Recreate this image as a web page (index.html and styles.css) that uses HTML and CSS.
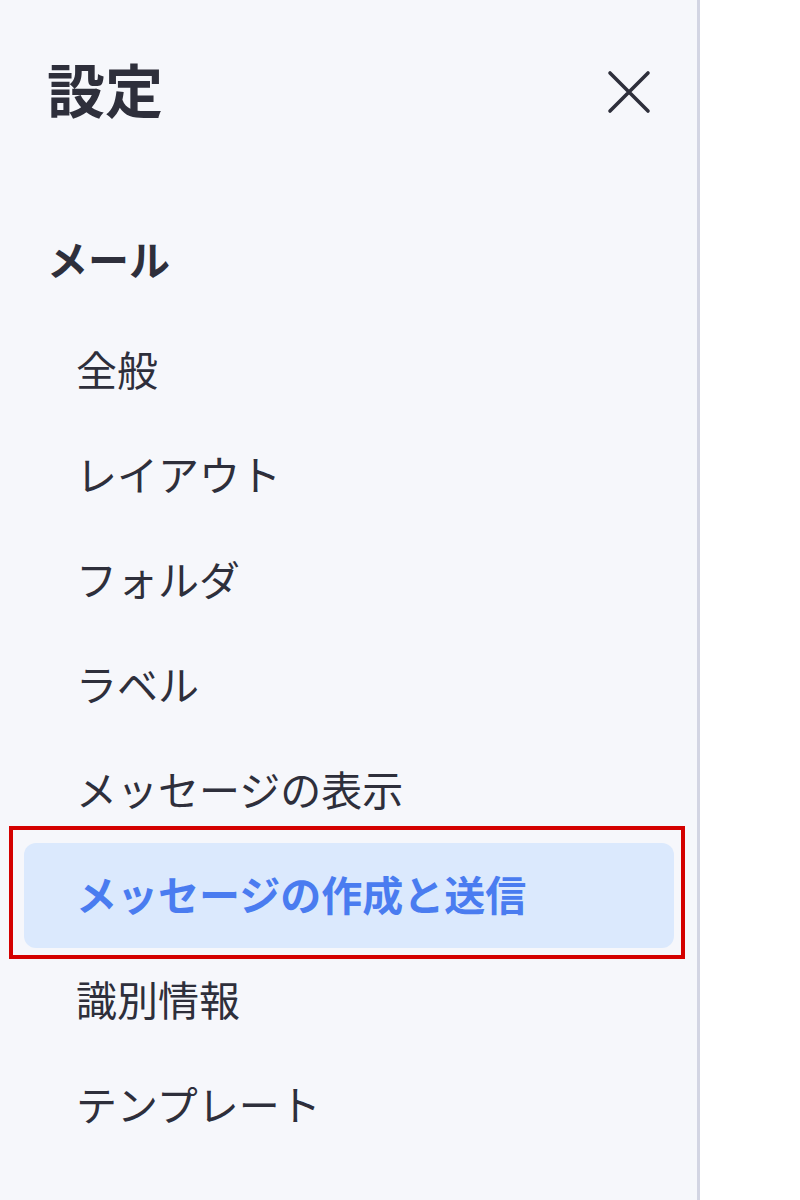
FILE: index.html
```html
<!DOCTYPE html>
<html lang="ja">
<head>
  <meta charset="UTF-8" />
  <meta name="viewport" content="width=device-width, initial-scale=1.0"/>
  <title>設定</title>
  <link rel="stylesheet" href="styles.css">
</head>
<body>
  <aside class="sidebar">
    <div class="sidebar-header">
      <h1>設定</h1>
      <button class="close-btn" type="button" aria-label="閉じる">
        <svg width="44" height="44" viewBox="0 0 44 44">
          <path d="M3 3 L41 41 M41 3 L3 41" stroke="#2e2f3b" stroke-width="3.6" stroke-linecap="round" fill="none"/>
        </svg>
      </button>
    </div>

    <h2 class="section-title">メール</h2>
    <ul class="menu">
      <li class="menu-item">全般</li>
      <li class="menu-item">レイアウト</li>
      <li class="menu-item">フォルダ</li>
      <li class="menu-item">ラベル</li>
      <li class="menu-item">メッセージの表示</li>
      <li class="menu-item active">メッセージの作成と送信</li>
      <li class="menu-item">識別情報</li>
      <li class="menu-item">テンプレート</li>
    </ul>
  </aside>
</body>
</html>
```

FILE: styles.css
```css
body {
  margin: 0;
  background: #ffffff;
  font-family: "Noto Sans CJK JP", "Noto Sans", sans-serif;
  color: #2e2f3b;
}
.sidebar {
  width: 700px;
  min-height: 100vh;
  box-sizing: border-box;
  background-color: #f6f7fb;
  border-right: 3px solid #d3d5e3;
  padding-top: 37px;
}
.sidebar-header {
  height: 110px;
  display: flex;
  align-items: center;
  justify-content: space-between;
  padding: 0 46px 0 47px;
}
.sidebar-header h1 {
  margin: 0 0 8px 0;
  font-size: 58px;
  line-height: 1;
  font-weight: bold;
}
.close-btn {
  background: none;
  border: none;
  padding: 0;
  width: 44px;
  height: 44px;
  cursor: pointer;
}
.close-btn svg {
  display: block;
}
.section-title {
  margin: 81px 0 0 47px;
  height: 60px;
  line-height: 60px;
  font-size: 41px;
  font-weight: bold;
}
.menu {
  list-style: none;
  margin: 30px 0 0 24px;
  padding: 0;
  width: 650px;
}
.menu-item {
  box-sizing: border-box;
  height: 105px;
  line-height: 100px;
  padding: 0 0 5px 52px;
  font-size: 41px;
  border-radius: 12px;
  cursor: pointer;
}
.menu-item.active {
  position: relative;
  background-color: #dbe9fd;
  color: #4a7cf0;
  font-weight: bold;
}
.menu-item.active::after {
  content: "";
  position: absolute;
  top: -17px;
  bottom: -11px;
  left: -15px;
  right: -11px;
  border: 4px solid #d40000;
  pointer-events: none;
}
```
